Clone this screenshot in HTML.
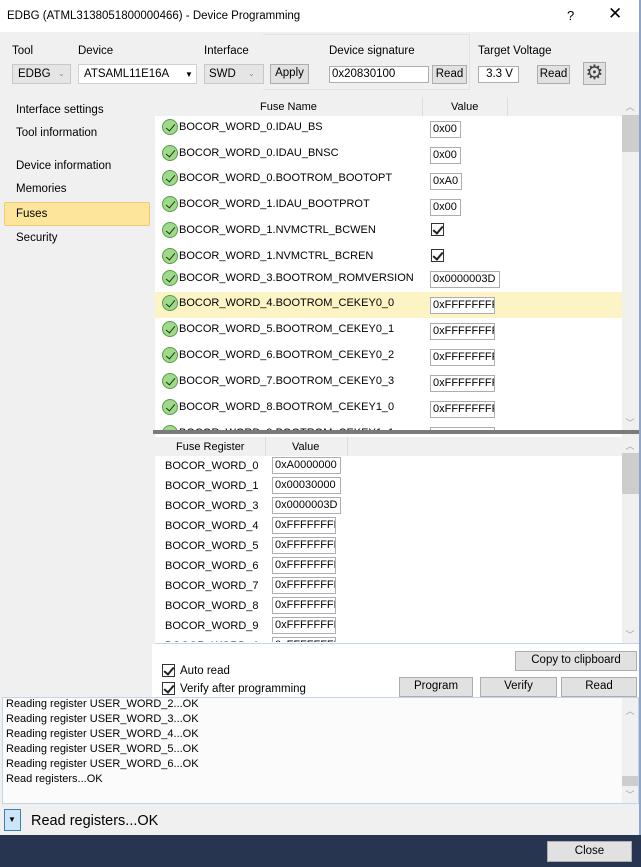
<!DOCTYPE html>
<html><head><meta charset="utf-8"><style>
*{box-sizing:border-box;margin:0;padding:0}
body{width:641px;height:867px;position:relative;overflow:hidden;background:#f0f0f0;font-family:"Liberation Sans",sans-serif;font-size:11px;color:#000}
.a{position:absolute}
.t{position:absolute;white-space:nowrap;line-height:16px}
.btn{position:absolute;background:#e1e1e1;border:1px solid #adadad;text-align:center;line-height:17px;font-size:11.5px}
.box{position:absolute;background:#fff;border:1px solid #abadb3;line-height:15px;padding-left:2px;white-space:nowrap;overflow:hidden}
.ok{position:absolute;left:162px;width:16px;height:16px;border-radius:50%;background:#9fd98a;border:1px solid #5a9a4a}
.ok:after{content:"";position:absolute;left:5px;top:2px;width:4px;height:8px;border:solid #1a3a10;border-width:0 1.5px 1.5px 0;transform:rotate(40deg)}
.cb{position:absolute;width:13px;height:13px;border:1px solid #333;background:#fff}
.cb:after{content:"";position:absolute;left:3px;top:0px;width:4px;height:8px;border:solid #222;border-width:0 2px 2px 0;transform:rotate(40deg)}
.sb{position:absolute;background:#f0f0f0}
.arr{position:absolute;color:#a0a0a0;font-size:9px;width:16px;text-align:center}
.tb .t{font-size:11.5px}
</style></head><body>
<!-- title -->
<div class="a" style="left:0;top:0;width:641px;height:32px;background:#fff"></div>
<div class="t" style="left:7px;top:8px;font-size:11.5px">EDBG (ATML3138051800000466) - Device Programming</div>
<div class="t" style="left:567px;top:8px;font-size:13px">?</div>
<div class="t" style="left:608px;top:6px;font-size:17px">✕</div>
<div class="a" style="left:639px;top:0;width:2px;height:867px;background:#8aa6c8"></div>
<!-- top bar -->
<div class="tb">
<div class="t" style="left:12px;top:43px">Tool</div>
<div class="t" style="left:78px;top:43px">Device</div>
<div class="t" style="left:204px;top:43px">Interface</div>
<div class="a" style="left:12px;top:64px;width:59px;height:20px;background:#e5e5e5;border:1px solid #c8c8c8"></div>
<div class="t" style="left:18px;top:66px">EDBG</div><div class="t" style="left:58px;top:66px;font-size:8px;color:#888">⌄</div>
<div class="a" style="left:78px;top:64px;width:119px;height:20px;background:#fff;border:1px solid #d0d0d0"></div>
<div class="t" style="left:84px;top:66px">ATSAML11E16A</div><div class="t" style="left:185px;top:67px;font-size:8px">▼</div>
<div class="a" style="left:204px;top:64px;width:60px;height:20px;background:#e5e5e5;border:1px solid #c8c8c8"></div>
<div class="t" style="left:209px;top:66px">SWD</div><div class="t" style="left:248px;top:66px;font-size:8px;color:#888">⌄</div>
<div class="a" style="left:263px;top:34px;width:207px;height:56px;border:1px solid #e2e2e2;border-left:none"></div>
<div class="t" style="left:329px;top:43px">Device signature</div>
<div class="t" style="left:478px;top:43px">Target Voltage</div>
</div>
<div class="btn" style="left:270px;top:64px;width:39px;height:20px">Apply</div>
<div class="box" style="left:329px;top:66px;width:100px;height:17px;font-size:11.5px">0x20830100</div>
<div class="btn" style="left:432px;top:65px;width:35px;height:19px">Read</div>
<div class="box" style="left:478px;top:66px;width:41px;height:17px;text-align:center;font-size:11.5px">3.3 V</div>
<div class="btn" style="left:537px;top:65px;width:33px;height:19px">Read</div>
<div class="btn" style="left:583px;top:62px;width:23px;height:23px;font-size:20px;line-height:20px;color:#444">⚙</div>
<!-- left nav -->
<div class="tb">
<div class="t" style="left:16px;top:102px">Interface settings</div>
<div class="t" style="left:16px;top:125px">Tool information</div>
<div class="t" style="left:16px;top:158px">Device information</div>
<div class="t" style="left:16px;top:181px">Memories</div>
<div class="a" style="left:4px;top:202px;width:146px;height:24px;background:#fde59c;border:1px solid #efca7a;border-radius:2px"></div>
<div class="t" style="left:16px;top:206px">Fuses</div>
<div class="t" style="left:16px;top:230px">Security</div>
</div>
<!-- upper table -->
<div class="a" style="left:155px;top:97px;width:467px;height:333px;background:#fff"></div>
<div class="a" style="left:155px;top:97px;width:467px;height:19px;background:#f0f0f0"></div>
<div class="a" style="left:422px;top:97px;width:1px;height:19px;background:#ddd"></div>
<div class="a" style="left:507px;top:97px;width:1px;height:19px;background:#ddd"></div>
<div class="t" style="left:260px;top:99px">Fuse Name</div>
<div class="t" style="left:451px;top:99px">Value</div>
<div class="sb" style="left:622px;top:97px;width:17px;height:333px"></div>
<div class="a" style="left:622px;top:115px;width:17px;height:37px;background:#cdcdcd"></div>
<div class="arr" style="left:622px;top:100px">︿</div><div class="arr" style="left:622px;top:416px">﹀</div>
<div class="a" style="left:155px;top:292px;width:467px;height:26px;background:#fdf4c6"></div>
<div class="a" style="left:155px;top:116px;width:467px;height:314px;overflow:hidden">
<div style="position:relative;left:-155px;top:-116px">
<div class="ok" style="top:119px"></div><div class="t" style="left:179px;top:119px">BOCOR_WORD_0.IDAU_BS</div><div class="box" style="left:430px;top:121px;width:31px;height:17px">0x00</div>
<div class="ok" style="top:145px"></div><div class="t" style="left:179px;top:145px">BOCOR_WORD_0.IDAU_BNSC</div><div class="box" style="left:430px;top:147px;width:31px;height:17px">0x00</div>
<div class="ok" style="top:170px"></div><div class="t" style="left:179px;top:170px">BOCOR_WORD_0.BOOTROM_BOOTOPT</div><div class="box" style="left:430px;top:173px;width:32px;height:17px">0xA0</div>
<div class="ok" style="top:196px"></div><div class="t" style="left:179px;top:196px">BOCOR_WORD_1.IDAU_BOOTPROT</div><div class="box" style="left:430px;top:199px;width:31px;height:17px">0x00</div>
<div class="ok" style="top:222px"></div><div class="t" style="left:179px;top:222px">BOCOR_WORD_1.NVMCTRL_BCWEN</div><div class="cb" style="left:431px;top:223px"></div>
<div class="ok" style="top:248px"></div><div class="t" style="left:179px;top:248px">BOCOR_WORD_1.NVMCTRL_BCREN</div><div class="cb" style="left:431px;top:249px"></div>
<div class="ok" style="top:270px"></div><div class="t" style="left:179px;top:270px">BOCOR_WORD_3.BOOTROM_ROMVERSION</div><div class="box" style="left:430px;top:271px;width:70px;height:17px">0x0000003D</div>
<div class="ok" style="top:295px"></div><div class="t" style="left:179px;top:295px">BOCOR_WORD_4.BOOTROM_CEKEY0_0</div><div class="box" style="left:430px;top:297px;width:65px;height:17px">0xFFFFFFFF</div>
<div class="ok" style="top:321px"></div><div class="t" style="left:179px;top:321px">BOCOR_WORD_5.BOOTROM_CEKEY0_1</div><div class="box" style="left:430px;top:323px;width:65px;height:17px">0xFFFFFFFF</div>
<div class="ok" style="top:347px"></div><div class="t" style="left:179px;top:347px">BOCOR_WORD_6.BOOTROM_CEKEY0_2</div><div class="box" style="left:430px;top:349px;width:65px;height:17px">0xFFFFFFFF</div>
<div class="ok" style="top:373px"></div><div class="t" style="left:179px;top:373px">BOCOR_WORD_7.BOOTROM_CEKEY0_3</div><div class="box" style="left:430px;top:375px;width:65px;height:17px">0xFFFFFFFF</div>
<div class="ok" style="top:399px"></div><div class="t" style="left:179px;top:399px">BOCOR_WORD_8.BOOTROM_CEKEY1_0</div><div class="box" style="left:430px;top:401px;width:65px;height:17px">0xFFFFFFFF</div>
<div class="ok" style="top:425px"></div><div class="t" style="left:179px;top:425px">BOCOR_WORD_9.BOOTROM_CEKEY1_1</div><div class="box" style="left:430px;top:427px;width:65px;height:17px">0xFFFFFFFF</div>
</div></div>
<div class="a" style="left:153px;top:430px;width:486px;height:4px;background:#7a7a7a"></div>
<!-- lower table -->
<div class="a" style="left:155px;top:434px;width:467px;height:209px;background:#fff"></div>
<div class="a" style="left:155px;top:437px;width:467px;height:19px;background:#f0f0f0"></div>
<div class="a" style="left:265px;top:437px;width:1px;height:19px;background:#ddd"></div>
<div class="a" style="left:347px;top:437px;width:1px;height:19px;background:#ddd"></div>
<div class="t" style="left:176px;top:439px">Fuse Register</div>
<div class="t" style="left:292px;top:439px">Value</div>
<div class="sb" style="left:622px;top:434px;width:17px;height:209px"></div>
<div class="a" style="left:622px;top:453px;width:17px;height:41px;background:#cdcdcd"></div>
<div class="arr" style="left:622px;top:439px">︿</div><div class="arr" style="left:622px;top:628px">﹀</div>
<div class="a" style="left:155px;top:456px;width:467px;height:186px;overflow:hidden">
<div style="position:relative;left:-155px;top:-456px">
<div class="t" style="left:165px;top:458px">BOCOR_WORD_0</div><div class="box" style="left:272px;top:457px;width:69px;height:17px">0xA0000000</div>
<div class="t" style="left:165px;top:478px">BOCOR_WORD_1</div><div class="box" style="left:272px;top:477px;width:69px;height:17px">0x00030000</div>
<div class="t" style="left:165px;top:498px">BOCOR_WORD_3</div><div class="box" style="left:272px;top:497px;width:69px;height:17px">0x0000003D</div>
<div class="t" style="left:165px;top:518px">BOCOR_WORD_4</div><div class="box" style="left:272px;top:517px;width:64px;height:17px">0xFFFFFFFF</div>
<div class="t" style="left:165px;top:538px">BOCOR_WORD_5</div><div class="box" style="left:272px;top:537px;width:64px;height:17px">0xFFFFFFFF</div>
<div class="t" style="left:165px;top:558px">BOCOR_WORD_6</div><div class="box" style="left:272px;top:557px;width:64px;height:17px">0xFFFFFFFF</div>
<div class="t" style="left:165px;top:578px">BOCOR_WORD_7</div><div class="box" style="left:272px;top:577px;width:64px;height:17px">0xFFFFFFFF</div>
<div class="t" style="left:165px;top:598px">BOCOR_WORD_8</div><div class="box" style="left:272px;top:597px;width:64px;height:17px">0xFFFFFFFF</div>
<div class="t" style="left:165px;top:618px">BOCOR_WORD_9</div><div class="box" style="left:272px;top:617px;width:64px;height:17px">0xFFFFFFFF</div>
<div class="t" style="left:165px;top:638px">BOCOR_WORD_A</div><div class="box" style="left:272px;top:637px;width:64px;height:17px">0xFFFFFFFF</div>
</div></div>
<div class="a" style="left:155px;top:643px;width:484px;height:1px;background:#c6d4e6"></div>
<!-- bottom controls -->
<div class="a" style="left:152px;top:644px;width:487px;height:53px;background:#fff"></div>
<div class="btn" style="left:515px;top:651px;width:122px;height:20px">Copy to clipboard</div>
<div class="cb" style="left:162px;top:664px"></div><div class="t" style="left:180px;top:663px;font-size:11.5px">Auto read</div>
<div class="cb" style="left:162px;top:682px"></div><div class="t" style="left:180px;top:681px;font-size:11.5px">Verify after programming</div>
<div class="btn" style="left:399px;top:677px;width:74px;height:20px">Program</div>
<div class="btn" style="left:480px;top:677px;width:77px;height:20px">Verify</div>
<div class="btn" style="left:561px;top:677px;width:76px;height:20px">Read</div>
<!-- log -->
<div class="a" style="left:2px;top:697px;width:637px;height:107px;background:#fbfbfb;border:1px solid #c6d4e6;overflow:hidden">
<div style="position:absolute;left:3px;top:-1px;line-height:15px;font-size:11px">Reading register USER_WORD_2...OK<br>Reading register USER_WORD_3...OK<br>Reading register USER_WORD_4...OK<br>Reading register USER_WORD_5...OK<br>Reading register USER_WORD_6...OK<br>Read registers...OK</div>
</div>
<div class="a" style="left:622px;top:698px;width:16px;height:105px;background:#f0f0f0"></div>
<div class="a" style="left:622px;top:776px;width:16px;height:10px;background:#cdcdcd"></div>
<div class="arr" style="left:622px;top:704px">︿</div><div class="arr" style="left:622px;top:788px">﹀</div>
<!-- status -->
<div class="a" style="left:4px;top:809px;width:17px;height:22px;background:#cde6f7;border:1px solid #3c7fb1"></div>
<div class="t" style="left:8px;top:812px;font-size:8px">▼</div>
<div class="t" style="left:31px;top:811px;font-size:14.5px;line-height:20px">Read registers...OK</div>
<div class="a" style="left:0;top:835px;width:641px;height:32px;background:#283550"></div>
<div class="btn" style="left:547px;top:841px;width:85px;height:21px;line-height:19px">Close</div>
</body></html>
